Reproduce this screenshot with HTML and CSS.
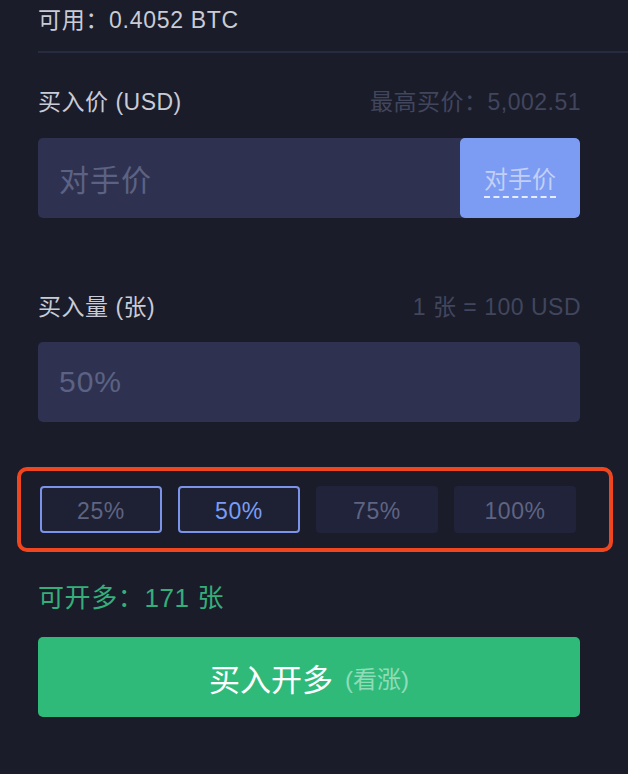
FILE: index.html
```html
<!DOCTYPE html>
<html lang="zh-CN">
<head>
<meta charset="utf-8">
<title>买入开多</title>
<link rel="stylesheet" href="styles.css">
</head>
<body>
<div class="panel">
  <div class="avail">可用：0.4052 BTC</div>
  <div class="divider"></div>

  <div class="field-head">
    <span class="label">买入价 (USD)</span>
    <span class="hint">最高买价：5,002.51</span>
  </div>
  <div class="input">
    <span class="placeholder">对手价</span>
    <span class="counter"><span class="counter-text">对手价</span></span>
  </div>

  <div class="field-head head-2">
    <span class="label">买入量 (张)</span>
    <span class="hint">1 张 = 100 USD</span>
  </div>
  <div class="input">
    <span class="placeholder">50%</span>
  </div>

  <div class="highlight">
    <div class="pct-row">
      <div class="pct pct-outlined">25%</div>
      <div class="pct pct-outlined pct-active">50%</div>
      <div class="pct">75%</div>
      <div class="pct">100%</div>
    </div>
  </div>

  <div class="can-open">可开多：171 张</div>
  <div class="buy-btn">买入开多<span class="buy-sub">(看涨)</span></div>
</div>
</body>
</html>
```
FILE: styles.css
```css
html, body {
  margin: 0;
  padding: 0;
  background: #1a1c2a;
}
body {
  width: 628px;
  height: 774px;
  overflow: hidden;
  font-family: "Liberation Sans", "Noto Sans CJK SC", sans-serif;
}
.panel {
  padding: 0 48px 0 38px;
}
.avail {
  height: 40px;
  line-height: 40px;
  font-size: 23px;
  letter-spacing: 0.7px;
  color: #c9cbd6;
}
.divider {
  margin-top: 11px;
  margin-right: -48px;
  height: 2px;
  background: #272b3f;
}
.field-head {
  margin-top: 34px;
  height: 30px;
  line-height: 30px;
  display: flex;
  justify-content: space-between;
  align-items: center;
}
.head-2 {
  margin-top: 74px;
}
.label {
  font-size: 23px;
  letter-spacing: 0.5px;
  color: #c9cbd6;
}
.hint {
  font-size: 23px;
  letter-spacing: 0.5px;
  margin-right: -1px;
  color: #41465d;
}
.field-head + .input {
  margin-top: 21px;
}
.head-2 + .input {
  margin-top: 20px;
}
.input {
  height: 80px;
  border-radius: 5px;
  background: #2e3250;
  display: flex;
  align-items: center;
  justify-content: space-between;
  overflow: hidden;
}
.placeholder {
  padding-left: 21px;
  font-size: 30px;
  letter-spacing: 1px;
  color: #5c6283;
}
.counter {
  width: 120px;
  height: 80px;
  border-radius: 5px;
  background: #7b9cf2;
  display: flex;
  align-items: center;
  justify-content: center;
}
.counter-text {
  font-size: 24px;
  line-height: 30px;
  color: #c2cff7;
  padding-top: 6px;
  padding-bottom: 1px;
  border-bottom: 2px dashed #e6ecff;
}
.highlight {
  margin: 45px -33px 0 -21px;
  border: 4px solid #f0461f;
  border-radius: 10px;
  padding: 15px 33px 15px 19px;
}
.pct-row {
  display: flex;
  gap: 16px;
}
.pct {
  width: 122px;
  height: 47px;
  box-sizing: border-box;
  border-radius: 4px;
  background: #20233a;
  color: #5f6482;
  font-size: 23px;
  letter-spacing: 0.6px;
  padding-top: 3px;
  display: flex;
  align-items: center;
  justify-content: center;
}
.pct-outlined {
  border: 2px solid #7b93e8;
  background: #1e2133;
}
.pct-active {
  color: #7b9cf2;
}
.can-open {
  margin-top: 28px;
  height: 36px;
  line-height: 36px;
  font-size: 26px;
  letter-spacing: 0.6px;
  color: #35ae7a;
}
.buy-btn {
  margin-top: 21px;
  height: 80px;
  border-radius: 5px;
  background: #2fba7a;
  display: flex;
  align-items: center;
  justify-content: center;
  font-size: 31px;
  color: #ffffff;
}
.buy-sub {
  margin-left: 12px;
  font-size: 24px;
  color: #8fdcb8;
}
```
